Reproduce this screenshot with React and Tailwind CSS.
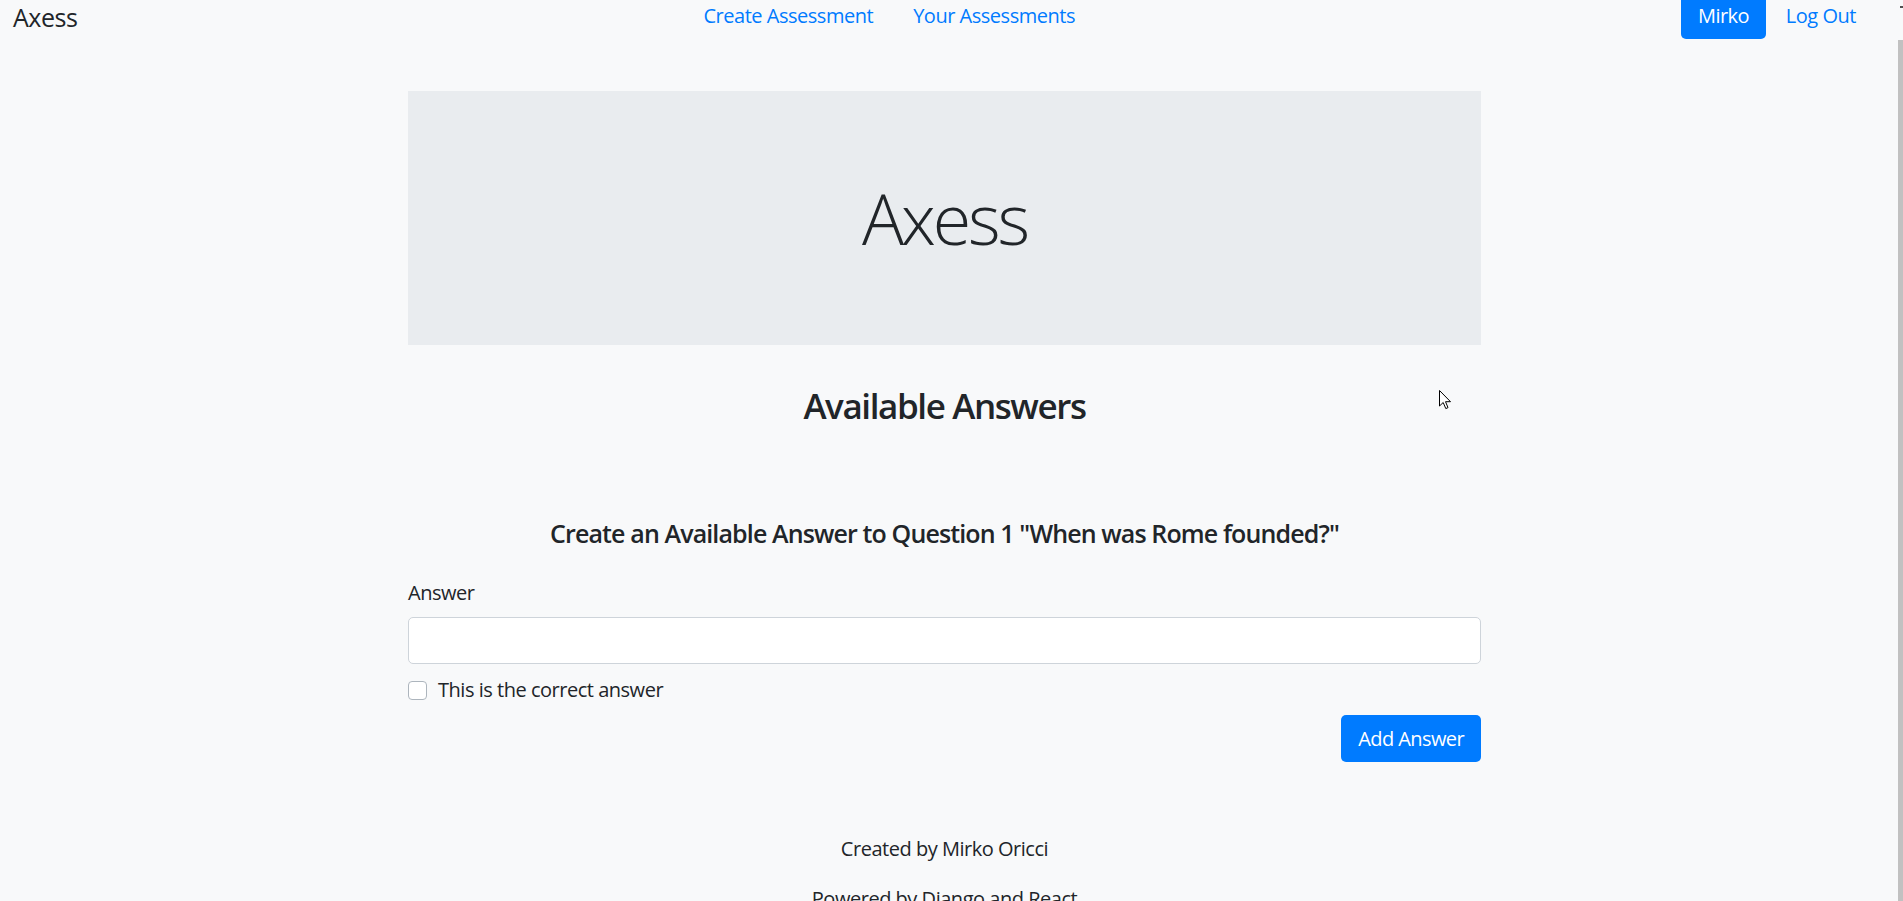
import { useState } from "react"

export default function App() {
    const [answer, setAnswer] = useState("")
    const [correct, setCorrect] = useState(false)

    return (
        <div className="relative flex h-[901px] w-full overflow-hidden bg-[#f8f9fa] text-[#212529] font-['Open_Sans',sans-serif] tracking-[-0.03em]">
            <div className="flex-1 flex flex-col">
                {/* Navbar */}
                <nav className="flex items-start h-[39px] pl-[13px] pr-[22px]">
                    <a href="#" className="mt-[2px] mr-[20px] text-[25px] leading-[30px] text-[#212529]">Axess</a>
                    <ul className="mx-auto flex mt-[1px]">
                        <li><a href="#" className="block px-[20px] text-[20px] leading-[30px] text-[#007bff]">Create Assessment</a></li>
                        <li><a href="#" className="block px-[20px] text-[20px] leading-[30px] text-[#007bff]">Your Assessments</a></li>
                    </ul>
                    <div className="flex items-start">
                        <button className="h-[39px] px-[17px] pt-[1px] pb-[8px] rounded-b-[5px] bg-[#007bff] text-white text-[20px] leading-[30px] tracking-[-0.03em]">Mirko</button>
                        <a href="#" className="block mt-[1px] px-[20px] text-[20px] leading-[30px] text-[#007bff]">Log Out</a>
                    </div>
                </nav>

                {/* Content */}
                <div className="pr-[9px]">
                    <div className="mx-auto w-[1073px]">
                        <div className="mt-[52px] h-[254px] bg-[#e9ecef] flex items-center justify-center">
                            <h1 className="text-[70px] leading-[1] font-light tracking-[-0.045em]">Axess</h1>
                        </div>

                        <h2 className="mt-[40px] text-center text-[35px] leading-[42px] font-semibold tracking-[-0.04em]">Available Answers</h2>

                        <form onSubmit={(e) => e.preventDefault()}>
                            <h5 className="mt-[91px] text-center text-[25px] leading-[30px] font-semibold tracking-[-0.035em]">
                                Create an Available Answer to Question 1 "When was Rome founded?"
                            </h5>

                            <label className="block mt-[30px] text-[20px] leading-[30px]">Answer</label>
                            <input
                                value={answer}
                                onChange={(e) => setAnswer(e.target.value)}
                                className="block mt-[9px] w-full h-[47px] px-[15px] bg-white border border-[#ced4da] rounded-[5px] text-[20px] outline-none"
                            />

                            <label className="mt-[11px] flex items-center h-[30px] gap-[11px] text-[20px] leading-[30px] cursor-pointer">
                                <span
                                    onClick={() => setCorrect(!correct)}
                                    className={`block w-[19px] h-[19px] rounded-[4px] border ${correct ? "bg-[#007bff] border-[#007bff]" : "bg-white border-[#adb5bd]"}`}
                                ></span>
                                This is the correct answer
                            </label>

                            <div className="mt-[10px] flex justify-end">
                                <button type="submit" className="h-[47px] px-[17px] rounded-[5px] bg-[#007bff] text-white text-[20px] leading-[30px] tracking-[-0.03em]">
                                    Add Answer
                                </button>
                            </div>
                        </form>

                        {/* Footer */}
                        <div className="mt-[72px] text-center text-[20px] leading-[30px]">
                            <p>Created by Mirko Oricci</p>
                            <p className="mt-[20px]">Powered by Django and React</p>
                        </div>
                    </div>
                </div>
            </div>

            {/* Scrollbar */}
            <div className="w-[5px] flex flex-col">
                <div className="h-[40px] pt-[6px] pl-[2px]">
                    <div className="w-[3px] h-[2px] bg-[#505050]"></div>
                </div>
                <div className="flex-1 bg-[#c1c1c1]"></div>
            </div>

            {/* Mouse pointer */}
            <svg className="absolute left-[1439px] top-[390px]" width="13" height="20" viewBox="0 0 13 20">
                <path d="M0.5 0.5 L0.5 16 L4.2 12.5 L6.8 18.6 L9 17.6 L6.5 11.7 L11.5 11.7 Z" fill="white" stroke="black" strokeWidth="1" strokeLinejoin="miter" />
            </svg>
        </div>
    )
}
